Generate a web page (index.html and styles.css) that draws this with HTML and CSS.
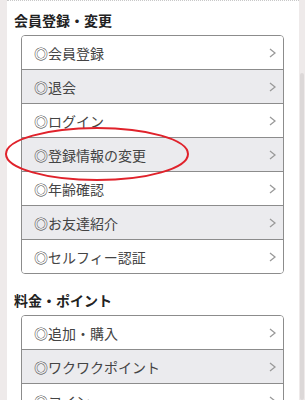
FILE: index.html
```html
<!DOCTYPE html>
<html lang="ja">
<head>
  <meta charset="UTF-8">
  <title>メニュー</title>
  <link rel="stylesheet" href="styles.css">
</head>
<body>
  <div class="page">
    <div class="section first">
      <h2>会員登録・変更</h2>
      <ul class="menu">
        <li><span>◎会員登録</span><svg class="arrow" viewBox="0 0 7 10"><polyline points="1,1 6,5 1,9"/></svg></li>
        <li class="alt"><span>◎退会</span><svg class="arrow" viewBox="0 0 7 10"><polyline points="1,1 6,5 1,9"/></svg></li>
        <li><span>◎ログイン</span><svg class="arrow" viewBox="0 0 7 10"><polyline points="1,1 6,5 1,9"/></svg></li>
        <li class="alt"><span>◎登録情報の変更</span><svg class="arrow" viewBox="0 0 7 10"><polyline points="1,1 6,5 1,9"/></svg></li>
        <li><span>◎年齢確認</span><svg class="arrow" viewBox="0 0 7 10"><polyline points="1,1 6,5 1,9"/></svg></li>
        <li class="alt"><span>◎お友達紹介</span><svg class="arrow" viewBox="0 0 7 10"><polyline points="1,1 6,5 1,9"/></svg></li>
        <li><span>◎セルフィー認証</span><svg class="arrow" viewBox="0 0 7 10"><polyline points="1,1 6,5 1,9"/></svg></li>
      </ul>
    </div>
    <div class="section">
      <h2>料金・ポイント</h2>
      <ul class="menu">
        <li><span>◎追加・購入</span><svg class="arrow" viewBox="0 0 7 10"><polyline points="1,1 6,5 1,9"/></svg></li>
        <li class="alt"><span>◎ワクワクポイント</span><svg class="arrow" viewBox="0 0 7 10"><polyline points="1,1 6,5 1,9"/></svg></li>
        <li><span>◎コイン</span><svg class="arrow" viewBox="0 0 7 10"><polyline points="1,1 6,5 1,9"/></svg></li>
      </ul>
    </div>
  </div>
  <svg class="mark" width="200" height="60" viewBox="0 0 200 60">
    <ellipse cx="97" cy="27" rx="91" ry="26"/>
  </svg>
  <div class="thumb"></div>
</body>
</html>
```

FILE: styles.css
```css
body { margin: 0; background: #eeeaea; font-family: "Noto Sans CJK JP", "Noto Sans", sans-serif; overflow: hidden; }
.page { margin: 0 6px 0 7px; background: #fff; min-height: 400px; padding: 0 7px; border-top: 1px dotted #c8c8c8; }
.section { padding-top: 16px; }
.section.first { padding-top: 9px; }
h2 { margin: 0 0 5px; font-size: 14px; line-height: 20px; font-weight: bold; color: #222; }
.menu { list-style: none; margin: 0 8px 0 7px; padding: 0; border: 1px solid #8c8c8c; border-radius: 4px; overflow: hidden; }
.menu li { height: 33px; display: flex; align-items: center; justify-content: space-between; padding: 0 7px 0 12px; font-size: 14px; color: #444; background: #fff; }
.menu li + li { border-top: 1px solid #8c8c8c; }
.menu li.alt { background: #ebebee; }
.arrow { width: 7px; height: 10px; fill: none; stroke: #9a9a9a; stroke-width: 1.3; }
.mark { position: absolute; left: 0; top: 127px; fill: none; stroke: #e0222b; stroke-width: 2; }
.thumb { position: fixed; right: 1px; top: 73px; width: 4px; height: 327px; background: #dcd8d8; border-radius: 2px; }
```
